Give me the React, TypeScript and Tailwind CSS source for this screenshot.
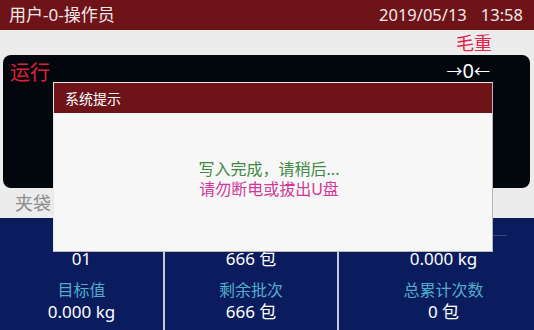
import React from "react";

const font = { fontFamily: '"Noto Sans", "Noto Sans CJK SC", sans-serif' };

function Col({ v1, label, v2, className }: { v1: string; label: string; v2: string; className?: string }) {
  return (
    <div className={"flex flex-col items-center pt-[30px] " + (className || "")}>
      <div className="h-[22px] leading-[22px] text-[17px] text-white whitespace-pre">{v1}</div>
      <div className="h-[22px] leading-[22px] text-[16px] text-[#52acc9] mt-[9px]">{label}</div>
      <div className="h-[22px] leading-[22px] text-[17px] text-white whitespace-pre">{v2}</div>
    </div>
  );
}

export default function App() {
  return (
    <div className="relative w-[534px] h-[330px] overflow-hidden bg-[#ececec] flex flex-col" style={font}>
      <div className="h-[30px] bg-[#6e1419] flex items-center justify-between pl-[9px] pr-[11px] text-[17px] text-[#f2e8e8]">
        <span>用户-0-操作员</span>
        <span className="flex text-[16.5px]">
          <span>2019/05/13</span>
          <span className="ml-[14px]">13:58</span>
        </span>
      </div>
      <div className="h-[25px] flex items-center justify-end pr-[42px]">
        <span className="text-[18px] text-[#e0244a] leading-none">毛重</span>
      </div>
      <div className="h-[133px] ml-[3px] mr-[4px] bg-[#02060d] rounded-[8px] flex items-start justify-between pl-[7px] pr-[40px] pt-[6px]">
        <span className="text-[20px] text-[#e0203a] leading-[24px]">运行</span>
        <span className="flex items-center h-[22px] text-white mt-[-1px]">
          <span className="text-[16px] leading-none">→</span>
          <span className="text-[20px] leading-none">0</span>
          <span className="text-[16px] leading-none">←</span>
        </span>
      </div>
      <div className="h-[30px] flex items-center pl-[15px]">
        <span className="text-[18px] text-[#8c8c8c]">夹袋</span>
      </div>
      <div className="relative flex-1 bg-[#0a1c5e] grid grid-cols-[163px_174px_1fr]">
        <Col v1="01" label="目标值" v2="0.000 kg" />
        <Col v1="666 包" label="剩余批次" v2="666 包" className="border-l-2 border-[#c4cad8] pb-[3px]" />
        <Col v1="0.000 kg" label="总累计次数" v2="0 包" className="border-l-2 border-[#c4cad8] pl-[14px]" />
        <div className="absolute left-[363px] top-[17px] w-[144px] h-px bg-[#3a4a80]" />
      </div>

      <div className="absolute left-[53px] top-[82px] w-[440px] h-[170px] border border-[#b8b8b8] border-t-[#e8e8e8] border-l-[#e8e8e8] bg-[#f7f7f7] flex flex-col">
        <div className="h-[30px] bg-[#6e1419] flex items-center pl-[11px] text-[14px] text-white">系统提示</div>
        <div className="flex-1 flex flex-col items-center justify-center pb-[6px] pr-[8px] text-[16px] leading-[20px]">
          <span className="text-[#3f8a44]">写入完成，请稍后...</span>
          <span className="text-[#d0399a]">请勿断电或拔出U盘</span>
        </div>
      </div>
    </div>
  );
}
